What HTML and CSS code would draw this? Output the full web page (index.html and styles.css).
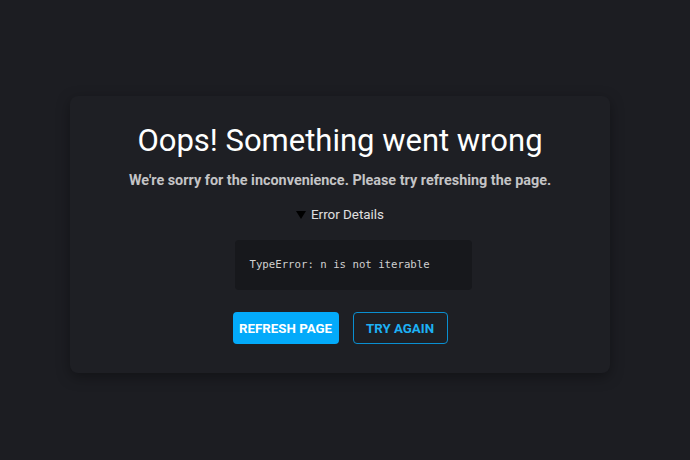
FILE: index.html
```html
<!DOCTYPE html>
<html lang="en">
<head>
<meta charset="utf-8">
<title>Error</title>
<link rel="stylesheet" href="styles.css">
</head>
<body>
<main class="page">
  <section class="card">
    <h1 class="title">Oops! Something went wrong</h1>
    <p class="subtitle">We're sorry for the inconvenience. Please try refreshing the page.</p>
    <details class="details" open>
      <summary class="summary"><span class="arrow"></span>Error Details</summary>
      <pre class="error">TypeError: n is not iterable</pre>
    </details>
    <div class="actions">
      <button class="btn btn-primary">Refresh Page</button>
      <button class="btn btn-outline">Try Again</button>
    </div>
  </section>
</main>
</body>
</html>
```
FILE: styles.css
```css
html, body {
  margin: 0;
  padding: 0;
  background: #1c1d22;
  height: 100%;
}
body {
  font-family: Roboto, "Liberation Sans", sans-serif;
  color: #ffffff;
}
.page {
  padding-top: 96px;
  padding-left: 70px;
}
.card {
  width: 540px;
  height: 277px;
  box-sizing: border-box;
  background: #1e1f24;
  border-radius: 8px;
  box-shadow: 0 4px 14px rgba(0, 0, 0, 0.35);
  display: flex;
  flex-direction: column;
  align-items: center;
  padding-top: 26px;
}
.title {
  margin: 0;
  font-size: 31px;
  font-weight: 400;
  line-height: 38px;
  color: #ffffff;
}
.subtitle {
  margin: 11px 0 0;
  font-size: 14.4px;
  font-weight: 700;
  line-height: 20px;
  color: #c4c4c6;
}
.details {
  margin-top: 16px;
  display: flex;
  flex-direction: column;
  align-items: center;
}
.summary {
  list-style: none;
  display: flex;
  align-items: center;
  gap: 5px;
  font-size: 13.4px;
  line-height: 16px;
  color: #e0e0e0;
  cursor: pointer;
}
.summary::-webkit-details-marker { display: none; }
.arrow {
  width: 0;
  height: 0;
  border-left: 5px solid transparent;
  border-right: 5px solid transparent;
  border-top: 8px solid #000000;
}
.error {
  margin: 17px 0 0 26px;
  width: 237px;
  height: 50px;
  box-sizing: border-box;
  padding: 17px 15px;
  background: #17181c;
  border-radius: 4px;
  font-family: "DejaVu Sans Mono", "Liberation Mono", monospace;
  font-size: 10.7px;
  line-height: 16px;
  color: #d0d0d0;
}
.actions {
  margin-top: 22px;
  display: flex;
  gap: 14px;
}
.btn {
  height: 32px;
  box-sizing: border-box;
  border-radius: 4px;
  font-family: Roboto, "Liberation Sans", sans-serif;
  font-size: 13.3px;
  font-weight: 700;
  text-transform: uppercase;
  cursor: pointer;
}
.btn-primary {
  width: 106px;
  padding: 0;
  background: #03aafa;
  border: none;
  color: #ffffff;
}
.btn-outline {
  width: 95px;
  padding: 0;
  background: transparent;
  border: 1px solid #0a8fd1;
  color: #1db1f5;
}
```
